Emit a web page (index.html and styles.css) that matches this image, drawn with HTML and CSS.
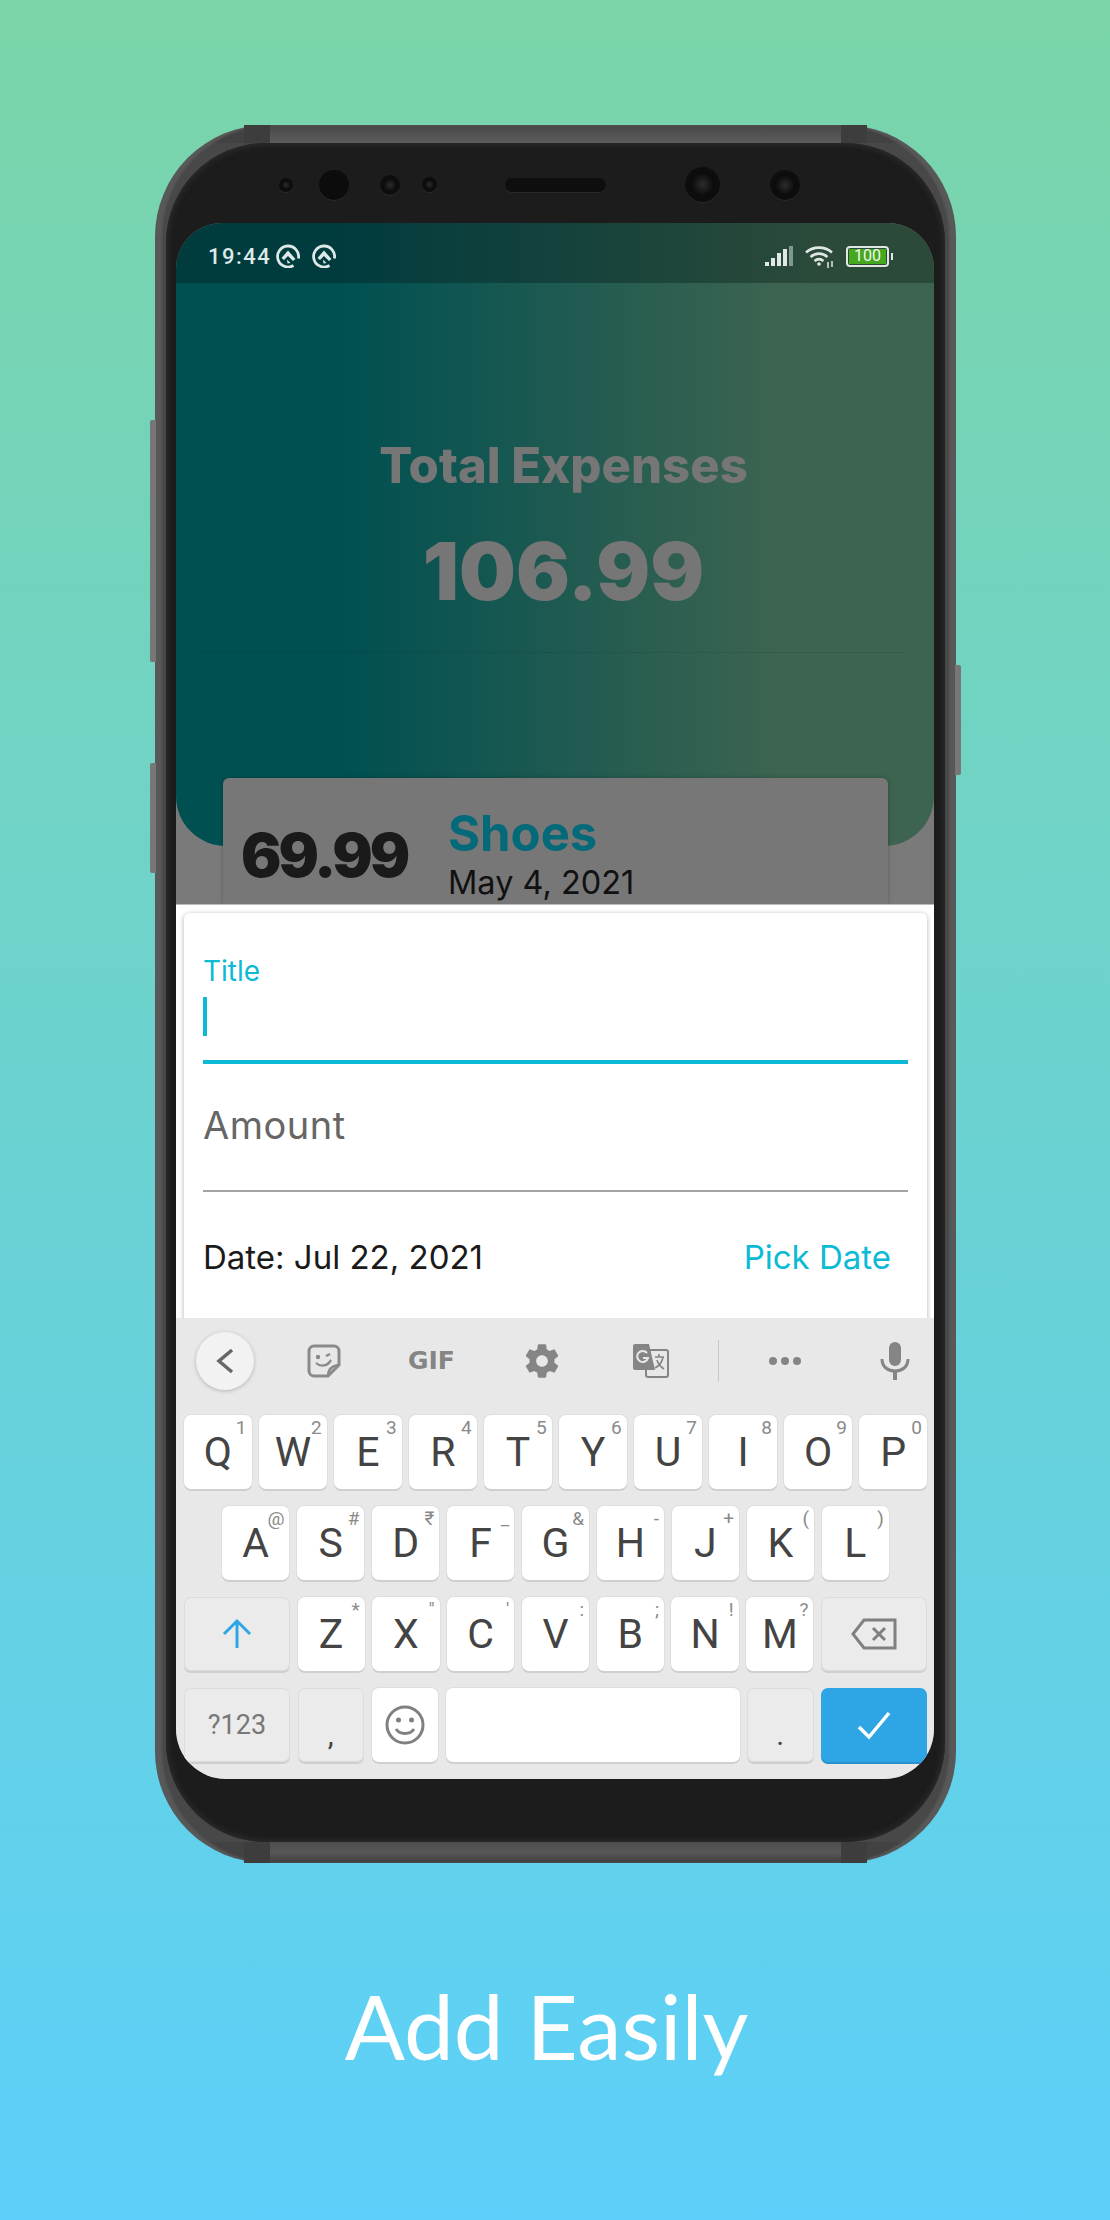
FILE: index.html
```html
<!DOCTYPE html>
<html lang="en">
<head>
    <meta charset="UTF-8">
    <title>Add Easily</title>
    <link rel="stylesheet" href="styles.css">
</head>
<body>
    <div class="phone">
        <span class="side-btn btn-power"></span>
        <span class="side-btn btn-vol-up"></span>
        <span class="side-btn btn-vol-down"></span>
        <span class="seam seam-tl"></span>
        <span class="seam seam-tr"></span>
        <span class="seam seam-bl"></span>
        <span class="seam seam-br"></span>

        <div class="bezel">
            <div class="sensors">
                <span class="lens lens-a"></span>
                <span class="lens lens-b"></span>
                <span class="lens lens-c"></span>
                <span class="lens lens-d"></span>
                <span class="speaker"></span>
                <span class="lens lens-e"></span>
                <span class="lens lens-f"></span>
            </div>

            <div class="screen">
                <div class="status-bar">
                    <span class="clock">19:44</span>
                    <svg class="qs-icon first" viewBox="0 0 24 24"><use href="#qs"/></svg>
                    <svg class="qs-icon" viewBox="0 0 24 24"><use href="#qs"/></svg>
                    <div class="status-right">
                        <svg class="signal" viewBox="0 0 28 20">
                            <rect x="0" y="16" width="4" height="4" fill="#dfe8e4"/>
                            <rect x="6" y="12" width="4" height="8" fill="#dfe8e4"/>
                            <rect x="12" y="7" width="4" height="13" fill="#dfe8e4"/>
                            <rect x="18" y="3" width="4" height="17" fill="#dfe8e4"/>
                            <rect x="24" y="0" width="4" height="20" fill="#7f9a8d"/>
                        </svg>
                        <svg class="wifi" viewBox="0 0 30 23" fill="none" stroke="#dfe8e4" stroke-width="2.6">
                            <path d="M1 7.5C8 1 20 1 27 7.5"/>
                            <path d="M5.5 12C10.500 7.500 17.500 7.500 22.500 12"/>
                            <path d="M9.500 16C12.500 13.500 15.500 13.500 18.500 16"/>
                            <circle cx="14" cy="19" r="1.800" fill="#dfe8e4" stroke="none"/>
                            <path d="M23 17v6M27 16v6" stroke-width="1.500"/>
                        </svg>
                        <div class="battery">
                            <div class="battery-body"><span class="battery-fill">100</span></div>
                            <span class="battery-tip"></span>
                        </div>
                    </div>
                </div>

                <div class="header">
                    <h2 class="total-label">Total Expenses</h2>
                    <div class="total-value">106.99</div>
                    <div class="header-rule"></div>
                </div>

                <div class="expense-card">
                    <div class="expense-amount">69.99</div>
                    <div class="expense-info">
                        <div class="expense-title">Shoes</div>
                        <div class="expense-date">May 4, 2021</div>
                    </div>
                </div>

                <div class="sheet">
                    <div class="form-card">
                        <div class="field field-active">
                            <label class="field-label">Title</label>
                            <span class="caret"></span>
                        </div>
                        <div class="field field-idle">
                            <span class="field-hint">Amount</span>
                        </div>
                        <div class="date-row">
                            <span class="date-text">Date: Jul 22, 2021</span>
                            <span class="pick-date">Pick Date</span>
                        </div>
                    </div>
                </div>

                <div class="keyboard">
                    <div class="toolbar">
                        <div class="back-btn">
                            <svg width="20" height="26" viewBox="0 0 20 26" fill="none" stroke="#666" stroke-width="3.5"><path d="M17 2L4 13l13 11"/></svg>
                        </div>
                        <svg class="tool tool-sticker" width="34" height="34" viewBox="0 0 34 34" fill="none" stroke="#8a8a8a" stroke-width="3">
                            <path d="M7 2h20a5 5 0 0 1 5 5v14L21 32H7a5 5 0 0 1-5-5V7a5 5 0 0 1 5-5z"/>
                            <path d="M21 32c0-6 3-10 11-11" stroke-width="2.500"/>
                            <circle cx="11" cy="13" r="2.200" fill="#8a8a8a" stroke="none"/>
                            <path d="M19 12l4-2" stroke-width="2.500"/>
                            <path d="M9 19c5 4 11 3 15-3-3 7-11 7-15 3z" fill="#8a8a8a" stroke-width="2"/>
                        </svg>
                        <span class="tool tool-gif">GIF</span>
                        <svg class="tool tool-gear" width="40" height="40" viewBox="0 0 24 24" fill="#858585">
                            <path d="M19.430 12.980c.040-.320.070-.640.070-.980s-.030-.660-.070-.980l2.110-1.650c.190-.150.240-.420.120-.640l-2-3.460c-.120-.220-.390-.300-.610-.220l-2.490 1c-.520-.400-1.080-.730-1.690-.980l-.380-2.650C14.460 2.180 14.250 2 14 2h-4c-.250 0-.460.180-.490.420l-.380 2.650c-.610.250-1.170.590-1.690.980l-2.490-1c-.230-.090-.490 0-.610.220l-2 3.460c-.130.220-.070.490.120.640l2.110 1.650c-.040.320-.070.650-.070.980s.030.660.070.980l-2.110 1.650c-.190.150-.240.420-.120.640l2 3.460c.120.220.390.300.610.220l2.490-1c.520.400 1.080.730 1.690.980l.380 2.650c.030.240.240.420.490.420h4c.250 0 .460-.180.490-.420l.380-2.650c.610-.250 1.170-.590 1.690-.980l2.490 1c.230.090.490 0 .610-.220l2-3.460c.120-.220.070-.490-.120-.640l-2.110-1.650zM12 15.500c-1.930 0-3.500-1.570-3.500-3.500s1.570-3.500 3.500-3.500 3.500 1.570 3.500 3.500-1.570 3.500-3.500 3.500z"/>
                        </svg>
                        <svg class="tool tool-translate" width="36" height="34" viewBox="0 0 36 34">
                            <rect x="13" y="6" width="22" height="27" rx="2" fill="#e8e8e8" stroke="#858585" stroke-width="2"/>
                            <path d="M2 0h14l6 26H2a2 2 0 0 1-2-2V2a2 2 0 0 1 2-2z" fill="#858585"/>
                            <path d="M14 9a5.500 5.500 0 1 0 1 5h-5" fill="none" stroke="#e8e8e8" stroke-width="2"/>
                            <path d="M22 13h9M26 10v3M30 13c-1 6-4 9-8 11M24 16c1 4 4 7 7 9" fill="none" stroke="#858585" stroke-width="1.600"/>
                        </svg>
                        <span class="tool-divider"></span>
                        <svg class="tool tool-dots" width="34" height="10" viewBox="0 0 34 10" fill="#858585">
                            <circle cx="5" cy="5" r="4"/><circle cx="17" cy="5" r="4"/><circle cx="29" cy="5" r="4"/>
                        </svg>
                        <svg class="tool tool-mic" width="30" height="38" viewBox="0 0 30 38" fill="none" stroke="#858585" stroke-width="3">
                            <rect x="9" y="0" width="12" height="24" rx="6" fill="#858585" stroke="none"/>
                            <path d="M2 17c0 8 6 12 13 12s13-4 13-12"/>
                            <path d="M15 29v9" stroke-width="4"/>
                        </svg>
                    </div>

                    <div class="key-row">
                        <div class="key"><sup>1</sup>Q</div>
                        <div class="key"><sup>2</sup>W</div>
                        <div class="key"><sup>3</sup>E</div>
                        <div class="key"><sup>4</sup>R</div>
                        <div class="key"><sup>5</sup>T</div>
                        <div class="key"><sup>6</sup>Y</div>
                        <div class="key"><sup>7</sup>U</div>
                        <div class="key"><sup>8</sup>I</div>
                        <div class="key"><sup>9</sup>O</div>
                        <div class="key"><sup>0</sup>P</div>
                    </div>
                    <div class="key-row row-home">
                        <div class="key"><sup>@</sup>A</div>
                        <div class="key"><sup>#</sup>S</div>
                        <div class="key"><sup>₹</sup>D</div>
                        <div class="key"><sup>_</sup>F</div>
                        <div class="key"><sup>&amp;</sup>G</div>
                        <div class="key"><sup>-</sup>H</div>
                        <div class="key"><sup>+</sup>J</div>
                        <div class="key"><sup>(</sup>K</div>
                        <div class="key"><sup>)</sup>L</div>
                    </div>
                    <div class="key-row">
                        <div class="key key-wide key-gray">
                            <svg width="32" height="32" viewBox="0 0 32 32" fill="none" stroke="#2ea6e6" stroke-width="3"><path d="M16 30V4M3 16L16 3l13 13"/></svg>
                        </div>
                        <div class="key"><sup>*</sup>Z</div>
                        <div class="key"><sup>"</sup>X</div>
                        <div class="key"><sup>'</sup>C</div>
                        <div class="key"><sup>:</sup>V</div>
                        <div class="key"><sup>;</sup>B</div>
                        <div class="key"><sup>!</sup>N</div>
                        <div class="key"><sup>?</sup>M</div>
                        <div class="key key-wide key-gray">
                            <svg width="46" height="32" viewBox="0 0 46 32" fill="none" stroke="#808080" stroke-width="3"><path d="M13 2h31v28H13L2 16z"/><path d="M22 10l12 12M34 10L22 22"/></svg>
                        </div>
                    </div>
                    <div class="key-row row-last">
                        <div class="key key-wide key-gray key-sym">?123</div>
                        <div class="key key-gray key-punct">,</div>
                        <div class="key">
                            <svg width="40" height="40" viewBox="0 0 40 40" fill="none" stroke="#808080" stroke-width="3"><circle cx="20" cy="20" r="18"/><circle cx="13.500" cy="15" r="2.500" fill="#808080" stroke="none"/><circle cx="26.500" cy="15" r="2.500" fill="#808080" stroke="none"/><path d="M11 24c4 6 14 6 18 0"/></svg>
                        </div>
                        <div class="key key-space"></div>
                        <div class="key key-gray key-punct">.</div>
                        <div class="key key-wide key-go">
                            <svg width="36" height="30" viewBox="0 0 36 30" fill="none" stroke="#fff" stroke-width="3.500"><path d="M3 17l10 10L33 3"/></svg>
                        </div>
                    </div>
                </div>
            </div>
        </div>
    </div>

    <div class="caption">Add Easily</div>

    <svg class="defs" width="0" height="0">
        <symbol id="qs" viewBox="0 0 24 24">
            <path d="M17.500 21.500A10.500 10.500 0 1 1 22.400 14.500" fill="none" stroke="#dce9e6" stroke-width="2.800"/>
            <path d="M5.500 14l6.500-7.500 7.500 8.500-2.500 2-5-5-4 4zM11 15.500l3.500 3.500-3 .5z" fill="#dce9e6"/>
        </symbol>
    </svg>
</body>
</html>
```

FILE: styles.css
```css
body {
    margin: 0;
    width: 1110px;
    height: 2220px;
    overflow: hidden;
    background: linear-gradient(180deg, #7bd5a8 0%, #5cd0fa 100%);
    font-family: Roboto, Arial, sans-serif;
}

/* phone shell */
.phone {
    position: relative;
    width: 801px;
    height: 1738px;
    margin: 125px 0 0 155px;
    box-sizing: border-box;
    padding: 18px 11px 21px;
    border-radius: 112px;
    background:
        linear-gradient(90deg, #424242 0, #424242 115px, transparent 115px, transparent 686px, #424242 686px, #424242 100%) top / 100% 18px no-repeat,
        linear-gradient(90deg, #424242 0, #424242 115px, transparent 115px, transparent 686px, #424242 686px, #424242 100%) bottom / 100% 21px no-repeat,
        linear-gradient(180deg, #484848 0, #5c5c5c 18px, #484848 18px, #484848 1717px, #4e4e4e 1717px, #575757 1727px, #3f3f3f 100%);
    box-shadow: inset 7px 0 2px #585858, inset -7px 0 2px #585858;
}

.side-btn {
    position: absolute;
    width: 6px;
    background: #777;
    border-radius: 2px 0 0 2px;
}

.btn-vol-up { left: -5px; top: 295px; height: 242px; }
.btn-vol-down { left: -5px; top: 638px; height: 110px; }
.btn-power { right: -5px; top: 540px; height: 110px; border-radius: 0 2px 2px 0; }

.seam {
    position: absolute;
    width: 26px;
    height: 18px;
    background: #3d3d3d;
}

.seam-tl { left: 89px; top: 0; }
.seam-tr { right: 89px; top: 0; }
.seam-bl { left: 89px; bottom: 0; height: 21px; }
.seam-br { right: 89px; bottom: 0; height: 21px; }

.bezel {
    position: relative;
    height: 100%;
    box-sizing: border-box;
    padding: 80px 11px 63px 10px;
    border-radius: 100px;
    background: #1c1c1c;
    box-shadow: inset 0 0 6px 2px #2c2c2c;
}

.sensors {
    position: absolute;
    left: 0;
    right: 0;
    top: 24px;
    height: 35px;
    display: flex;
    align-items: center;
}

.lens {
    flex: none;
    border-radius: 50%;
    background: radial-gradient(circle, #2c2c2c 0, #0c0c0c 45%, #101010 100%);
    box-shadow: 0 1px 0 #2a2a2a;
}

.lens-a { width: 14px; height: 14px; margin-left: 113px; }
.lens-b { width: 30px; height: 30px; margin-left: 26px; background: #0c0c0c; }
.lens-c { width: 20px; height: 20px; margin-left: 31px; }
.lens-d { width: 15px; height: 15px; margin-left: 22px; }
.lens-e { width: 35px; height: 35px; margin-left: 79px; }
.lens-f { width: 30px; height: 30px; margin-left: 50px; }

.speaker {
    flex: none;
    width: 101px;
    height: 14px;
    margin-left: 68px;
    border-radius: 7px;
    background: #0e0e0e;
    box-shadow: 0 1px 0 #2a2a2a;
}

/* screen */
.screen {
    display: flex;
    flex-direction: column;
    height: 100%;
    border-radius: 46px 46px 50px 50px;
    overflow: hidden;
    background: #7a7a7a;
}

.status-bar {
    flex: none;
    height: 60px;
    display: flex;
    align-items: center;
    box-sizing: border-box;
    padding: 6px 41px 0 32px;
    background: linear-gradient(90deg, #003b3e 0, #003b3e 20%, #2b4a3a 85%, #2b4a3a 100%);
    color: #dce9e6;
}

.clock {
    font-size: 22px;
    font-weight: 500;
    letter-spacing: 1.5px;
}

.qs-icon {
    width: 24px;
    height: 24px;
    margin-left: 12px;
}

.qs-icon.first {
    margin-left: 5px;
}

.status-right {
    margin-left: auto;
    display: flex;
    align-items: center;
}

.signal { width: 28px; height: 20px; }
.wifi { width: 30px; height: 23px; margin-left: 12px; }

.battery {
    display: flex;
    align-items: center;
    margin-left: 11px;
}

.battery-body {
    width: 43px;
    height: 21px;
    box-sizing: border-box;
    padding: 1px;
    border: 2.5px solid #dfe8e4;
    border-radius: 4px;
}

.battery-fill {
    display: block;
    height: 100%;
    background: #46a81e;
    color: #f2f7ee;
    font-size: 16px;
    line-height: 14px;
    text-align: center;
}

.battery-tip {
    width: 2px;
    height: 7px;
    margin-left: 2px;
    background: #dfe8e4;
}

.header {
    flex: none;
    height: 563px;
    box-sizing: border-box;
    padding-top: 160px;
    text-align: center;
    font-family: Inter, Roboto, sans-serif;
    border-radius: 0 0 50px 50px;
    background: linear-gradient(90deg, #005052 0, #005052 22%, #3d6450 80%, #3d6450 100%);
}

.total-label {
    margin: 0 0 0 17px;
    font-size: 49px;
    font-weight: 800;
    line-height: 46px;
    color: #767676;
}

.total-value {
    margin: 43px 0 0 17px;
    font-size: 80px;
    font-weight: 900;
    line-height: 78px;
    color: #767676;
}

.header-rule {
    height: 1px;
    margin: 42px 28px 0 20px;
    background: rgba(0, 0, 0, 0.07);
}

.expense-card {
    flex: none;
    display: flex;
    box-sizing: border-box;
    height: 126px;
    margin: -68px 46px 0 47px;
    border-radius: 6px 6px 0 0;
    background: #777;
    box-shadow: 0 0 4px rgba(0, 0, 0, 0.25);
    overflow: hidden;
    font-family: Inter, Roboto, sans-serif;
}

.expense-amount {
    width: 225px;
    box-sizing: border-box;
    padding: 42px 0 0 18px;
    font-size: 60px;
    font-weight: 900;
    line-height: 70px;
    letter-spacing: -3px;
    color: #1a1a1a;
}

.expense-info {
    padding-top: 31px;
}

.expense-title {
    font-size: 49px;
    font-weight: 700;
    line-height: 50px;
    color: #046a7a;
}

.expense-date {
    margin-top: 4px;
    font-size: 32.5px;
    line-height: 40px;
    color: #111;
}

/* add expense sheet */
.sheet {
    flex: none;
    height: 414px;
    box-sizing: border-box;
    padding: 8px 7px 0 8px;
    background: #fff;
    overflow: hidden;
    position: relative;
    border-top: 1px solid #bbb;
    font-family: Inter, Roboto, sans-serif;
}

.form-card {
    height: 420px;
    box-sizing: border-box;
    padding: 0 19px;
    border-radius: 6px;
    background: #fff;
    box-shadow: 0 1px 5px rgba(0, 0, 0, 0.32);
}

.field {
    box-sizing: border-box;
}

.field-active {
    height: 151px;
    padding-top: 41px;
    border-bottom: 4px solid #0cbad6;
}

.field-label {
    display: block;
    font-size: 28px;
    line-height: 34px;
    color: #0cbad6;
}

.caret {
    display: block;
    width: 4px;
    height: 39px;
    margin-top: 9px;
    background: #0cbad6;
}

.field-idle {
    height: 128px;
    padding-top: 40px;
    border-bottom: 2px solid #a4a4a4;
}

.field-hint {
    font-size: 38px;
    line-height: 42px;
    letter-spacing: 0.5px;
    color: #666;
}

.date-row {
    display: flex;
    justify-content: space-between;
    padding: 45px 17px 0 0;
    font-size: 33px;
    line-height: 40px;
}

.date-text { color: #1a1a1a; }
.pick-date { color: #0cbad6; }

/* keyboard */
.keyboard {
    flex: 1;
    box-sizing: border-box;
    padding: 0 7px 0 8px;
    background: #e8e8e8;
}

.toolbar {
    display: flex;
    align-items: center;
    height: 85px;
    padding-bottom: 12px;
}

.back-btn {
    flex: none;
    width: 58px;
    height: 58px;
    margin-left: 12px;
    display: flex;
    align-items: center;
    justify-content: center;
    border-radius: 50%;
    background: #f2f2f2;
    box-shadow: 0 1px 4px rgba(0, 0, 0, 0.22);
}

.tool { flex: none; }
.tool-sticker { margin-left: 53px; }

.tool-gif {
    margin-left: 67px;
    width: 47px;
    font-family: "DejaVu Sans", sans-serif;
    font-size: 25px;
    font-weight: 700;
    line-height: 30px;
    color: #858585;
}

.tool-gear { margin-left: 67px; }
.tool-translate { margin-left: 71px; }

.tool-divider {
    flex: none;
    width: 1px;
    height: 42px;
    margin-left: 49px;
    background: #c8c8c8;
}

.tool-dots { margin-left: 49px; }
.tool-mic { margin-left: 78px; }

.key-row {
    display: flex;
    gap: 7.5px;
    height: 74px;
    margin-bottom: 17px;
}

.row-home {
    padding: 0 38px;
}

.key {
    position: relative;
    flex: 1 1 0;
    min-width: 0;
    display: flex;
    align-items: center;
    justify-content: center;
    border-radius: 7px;
    background: #fff;
    box-shadow: 0 2px 0 #cfcfcf, 0 0 0 1px rgba(0, 0, 0, 0.04);
    font-size: 41px;
    color: #444;
}

.key sup {
    position: absolute;
    top: 3px;
    right: 5px;
    font-size: 19px;
    line-height: 20px;
    color: #8a8a8a;
}

.key-wide {
    flex: none;
    width: 106px;
}

.key-gray {
    background: #ebebeb;
    box-shadow: 0 2px 0 #cfcfcf, inset 0 0 0 1px #dcdcdc;
}

.key-sym {
    font-size: 27px;
    color: #777;
}

.key-punct {
    align-items: flex-end;
    padding-bottom: 10px;
    box-sizing: border-box;
    font-size: 30px;
}

.key-space {
    flex: none;
    width: 294px;
}

.key-go {
    background: #2ea6e6;
    box-shadow: 0 2px 0 #2a90c8;
}

.caption {
    margin: 108px 0 0 0;
    padding-right: 17px;
    text-align: center;
    font-family: Lato, sans-serif;
    font-size: 89px;
    line-height: 110px;
    color: #fff;
}

.defs {
    position: absolute;
}
```
